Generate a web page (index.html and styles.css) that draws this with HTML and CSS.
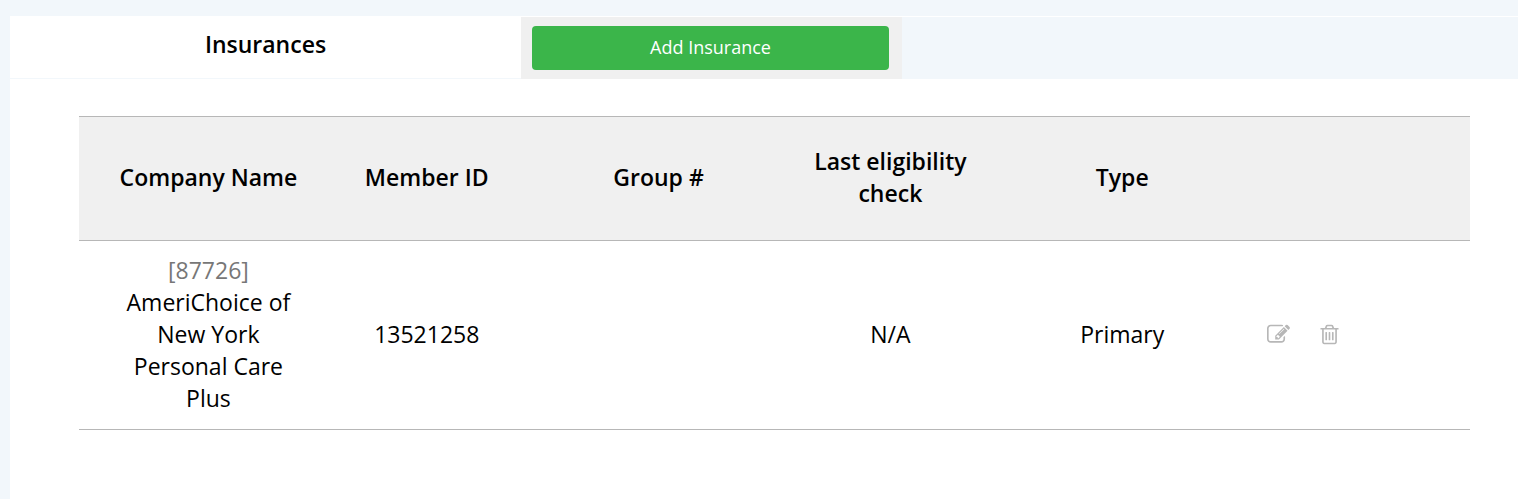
FILE: index.html
```html
<!DOCTYPE html>
<html lang="en">
<head>
<meta charset="utf-8">
<title>Insurances</title>
<link rel="stylesheet" href="styles.css">
</head>
<body>
<main class="panel">
  <header class="tabs">
    <h1 class="tab-title">Insurances</h1>
    <div class="tab-action"><button class="add-button" type="button">Add Insurance</button></div>
  </header>
  <section class="content">
    <table class="insurances">
      <thead>
        <tr>
          <th scope="col">Company Name</th>
          <th scope="col">Member ID</th>
          <th scope="col">Group #</th>
          <th scope="col">Last eligibility check</th>
          <th scope="col">Type</th>
          <td></td>
        </tr>
      </thead>
      <tbody>
        <tr>
          <td><span class="payer-id">[87726]</span> AmeriChoice of New York Personal Care Plus</td>
          <td>13521258</td>
          <td></td>
          <td>N/A</td>
          <td>Primary</td>
          <td>
            <div class="actions">
              <button class="icon-button" type="button" aria-label="Edit">
                <svg class="icon" viewBox="0 0 1792 1792" aria-hidden="true"><path d="M888 1184l116-116-152-152-116 116v56h96v96h56zm440-720q-16-16-33 1l-350 350q-17 17-1 33t33-1l350-350q17-17 1-33zm80 594v190q0 119-84.5 203.5t-203.5 84.5h-832q-119 0-203.5-84.5t-84.5-203.5v-832q0-119 84.5-203.5t203.5-84.5h832q63 0 117 25 15 7 18 23 3 17-9 29l-49 49q-14 14-32 8-23-6-45-6h-832q-66 0-113 47t-47 113v832q0 66 47 113t113 47h832q66 0 113-47t47-113v-126q0-13 9-22l64-64q15-15 35-7t20 29zm-96-738l288 288-672 672h-288v-288zm444 132l-92 92-288-288 92-92q28-28 68-28t68 28l152 152q28 28 28 68t-28 68z"/></svg>
              </button>
              <button class="icon-button" type="button" aria-label="Delete">
                <svg class="icon" viewBox="0 0 1792 1792" aria-hidden="true"><path d="M704 736v576q0 14-9 23t-23 9h-64q-14 0-23-9t-9-23v-576q0-14 9-23t23-9h64q14 0 23 9t9 23zm256 0v576q0 14-9 23t-23 9h-64q-14 0-23-9t-9-23v-576q0-14 9-23t23-9h64q14 0 23 9t9 23zm256 0v576q0 14-9 23t-23 9h-64q-14 0-23-9t-9-23v-576q0-14 9-23t23-9h64q14 0 23 9t9 23zm128 724v-948h-896v948q0 22 7 40.5t14.5 27 10.5 8.5h832q3 0 10.5-8.5t14.5-27 7-40.5zm-672-1076h448l-48-117q-7-9-17-11h-317q-10 2-17 11zm928 32v64q0 14-9 23t-23 9h-96v948q0 83-47 143.5t-113 60.5h-832q-66 0-113-58.5t-47-141.5v-952h-96q-14 0-23-9t-9-23v-64q0-14 9-23t23-9h309l70-167q15-37 54-63t79-26h320q40 0 79 26t54 63l70 167h309q14 0 23 9t9 23z"/></svg>
              </button>
            </div>
          </td>
        </tr>
      </tbody>
    </table>
  </section>
</main>
</body>
</html>
```
FILE: styles.css
```css
* {
  box-sizing: border-box;
}

body {
  margin: 0;
  padding: 16px 0 0 10px;
  min-height: 100vh;
  display: flex;
  background: #f2f7fb;
  color: #000;
  font-family: "Open Sans", sans-serif;
  font-size: 23px;
  line-height: 32px;
}

.panel {
  flex: 1;
  background: #fff;
}

.tabs {
  display: grid;
  grid-template-columns: 511fr 381fr 616fr;
  margin-top: 1px;
  background: #f2f7fb;
}

.tab-title {
  margin: 0 0 1px;
  padding: 11px 12px 17px;
  background: #fff;
  font-size: 23px;
  font-weight: 600;
  text-align: center;
}

.tab-action {
  display: flex;
  padding: 9px 13px 9px 11px;
  background: #f0f0f0;
}

.add-button {
  flex: 1;
  padding: 9px 10px 11px;
  border: 0;
  border-radius: 4px;
  background: #3bb54a;
  color: #fff;
  font: inherit;
  font-size: 18px;
  line-height: 24px;
  cursor: pointer;
}

.content {
  padding: 37px 48px 48px 69px;
}

.insurances {
  width: 100%;
  table-layout: fixed;
  border-collapse: separate;
  border-spacing: 0;
  text-align: center;
}

.insurances th,
.insurances td {
  padding: 13px 12px 15px;
  border-bottom: 1px solid #b7b7b7;
  font-weight: 400;
  vertical-align: middle;
}

.insurances thead th,
.insurances thead td {
  padding-top: 28px;
  padding-bottom: 31px;
  border-top: 1px solid #b7b7b7;
  background: #f0f0f0;
  font-weight: 600;
}

.insurances th:first-child,
.insurances td:first-child {
  padding-left: 39px;
}

.insurances td:last-child {
  padding-left: 29px;
}

.payer-id {
  display: block;
  color: #777;
}

.actions {
  display: flex;
  gap: 28px;
}

.icon-button {
  display: flex;
  padding: 0;
  border: 0;
  background: none;
  color: #b7b7b7;
  cursor: pointer;
}

.icon {
  width: 23px;
  height: 23px;
  fill: currentColor;
}
```
